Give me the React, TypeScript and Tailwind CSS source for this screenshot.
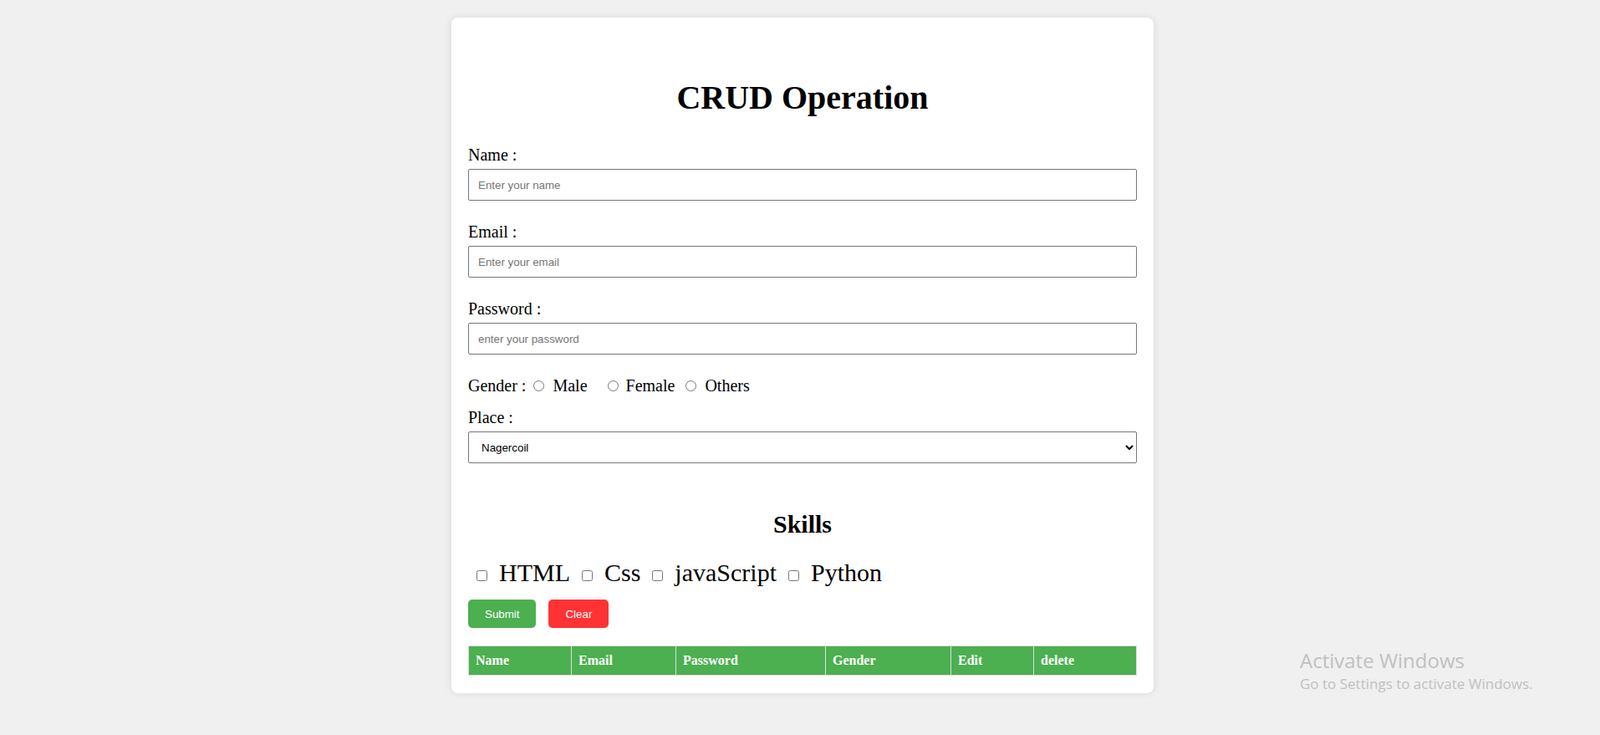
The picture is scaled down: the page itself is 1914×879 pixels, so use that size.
import React from "react"

const serif = { fontFamily: '"Liberation Serif", "Times New Roman", serif' }

export default function App() {
    return (
        <div className="relative min-h-screen bg-[#f0f0f0] pt-[21px] pl-[6px]" style={serif}>
            <div className="mx-auto w-[840px] rounded-[8px] bg-white px-[20px] pt-[73px] pb-[21px] shadow-[0_0_10px_rgba(0,0,0,0.1)] text-black">
                <h1 className="text-center text-[40px] leading-[46px] font-bold">CRUD Operation</h1>

                {/* Name */}
                <label className="mt-[34px] block text-[20px] leading-[23px]">Name :</label>
                <input
                    type="text"
                    placeholder="Enter your name"
                    className="mt-[5px] block h-[38px] w-full rounded-[2px] border border-[#767676] pl-[11px] text-[13.33px] font-['Liberation_Sans',Arial,sans-serif] placeholder:text-[#757575] outline-none"
                />

                {/* Email */}
                <label className="mt-[26px] block text-[20px] leading-[23px]">Email :</label>
                <input
                    type="email"
                    placeholder="Enter your email"
                    className="mt-[5px] block h-[38px] w-full rounded-[2px] border border-[#767676] pl-[11px] text-[13.33px] font-['Liberation_Sans',Arial,sans-serif] placeholder:text-[#757575] outline-none"
                />

                {/* Password */}
                <label className="mt-[26px] block text-[20px] leading-[23px]">Password :</label>
                <input
                    type="password"
                    placeholder="enter your password"
                    className="mt-[5px] block h-[38px] w-full rounded-[2px] border border-[#767676] pl-[11px] text-[13.33px] font-['Liberation_Sans',Arial,sans-serif] placeholder:text-[#757575] outline-none"
                />

                {/* Gender */}
                <div className="mt-[26px] flex items-center text-[20px] leading-[23px]">
                    <span>Gender :</span>
                    <input type="radio" name="gender" className="ml-[9px] h-[13px] w-[13px]" />
                    <span className="ml-[10px]">Male</span>
                    <input type="radio" name="gender" className="ml-[24px] h-[13px] w-[13px]" />
                    <span className="ml-[9px]">Female</span>
                    <input type="radio" name="gender" className="ml-[13px] h-[13px] w-[13px]" />
                    <span className="ml-[10px]">Others</span>
                </div>

                {/* Place */}
                <label className="mt-[15px] block text-[20px] leading-[23px]">Place :</label>
                <select className="mt-[5px] block h-[38px] w-full rounded-[2px] border border-[#767676] bg-white pl-[11px] pr-[6px] text-[13.33px] font-['Liberation_Sans',Arial,sans-serif] text-black outline-none">
                    <option>Nagercoil</option>
                    <option>Chennai</option>
                    <option>Madurai</option>
                </select>

                {/* Skills */}
                <h2 className="mt-[55px] text-center text-[30px] leading-[35px] font-bold">Skills</h2>
                <div className="mt-[23px] flex items-center gap-[14px] pl-[10px] text-[30px] leading-[35px]">
                    <input type="checkbox" className="mt-[8px] h-[13px] w-[13px]" />
                    <span>HTML</span>
                    <input type="checkbox" className="mt-[8px] h-[13px] w-[13px]" />
                    <span>Css</span>
                    <input type="checkbox" className="mt-[8px] h-[13px] w-[13px]" />
                    <span>javaScript</span>
                    <input type="checkbox" className="mt-[8px] h-[13px] w-[13px]" />
                    <span>Python</span>
                </div>

                {/* Buttons */}
                <div className="mt-[15px] flex gap-[15px] font-['Liberation_Sans',Arial,sans-serif] text-[13.33px] leading-[15px] text-white">
                    <button className="h-[34px] rounded-[5px] bg-[#4caf50] px-[20px]">Submit</button>
                    <button className="h-[34px] rounded-[5px] bg-[#ff3333] px-[20px]">Clear</button>
                </div>

                {/* Table */}
                <table className="mt-[21px] w-full table-fixed border-collapse text-left text-[16px] leading-[18px]">
                    <thead>
                        <tr className="bg-[#4caf50] text-white">
                            <th className="w-[123px] border border-[#dddddd] p-[8px] font-bold">Name</th>
                            <th className="w-[125px] border border-[#dddddd] p-[8px] font-bold">Email</th>
                            <th className="w-[179px] border border-[#dddddd] p-[8px] font-bold">Password</th>
                            <th className="w-[150px] border border-[#dddddd] p-[8px] font-bold">Gender</th>
                            <th className="w-[99px] border border-[#dddddd] p-[8px] font-bold">Edit</th>
                            <th className="border border-[#dddddd] p-[8px] font-bold">delete</th>
                        </tr>
                    </thead>
                    <tbody></tbody>
                </table>
            </div>

            {/* Windows watermark */}
            <div className="pointer-events-none absolute left-[1555px] top-[774px] font-['Open_Sans','Noto_Sans',sans-serif] text-[#c0c0c0]">
                <div className="text-[24px] leading-[31px]">Activate Windows</div>
                <div className="text-[17px] leading-[26px]">Go to Settings to activate Windows.</div>
            </div>
        </div>
    )
}
